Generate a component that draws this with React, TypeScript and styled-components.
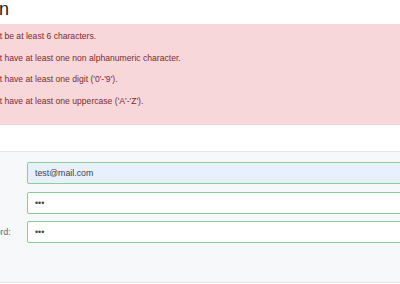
import styled, { createGlobalStyle } from 'styled-components';

const GlobalStyle = createGlobalStyle`
  html, body {
    margin: 0;
    padding: 0;
    background: #ffffff;
    overflow: hidden;
  }
  body {
    font-family: "Liberation Sans", Arial, sans-serif;
    font-size: 8.6px;
    color: #212529;
  }
`;

const Page = styled.div`
  width: 640px;
  margin-left: -83.5px;
`;

const Title = styled.h2`
  margin: 0 0 6px -3.5px;
  font-size: 18px;
  line-height: 18px;
  font-weight: 400;
  color: #222222;
`;

const Alert = styled.div`
  background: #f8d7da;
  color: #7a2a31;
  padding: 2px 0 13px 22.5px;
`;

const AlertLine = styled.div`
  line-height: 21.5px;
`;

const Panel = styled.form`
  margin-top: 26px;
  background: #f7f8fa;
  border-top: 1px solid #e4e6e8;
  border-bottom: 1px solid #e4e6e8;
  padding: 10px 0 39px 22.5px;
  display: flex;
  flex-direction: column;
  gap: 7.5px;
`;

const Row = styled.div`
  display: grid;
  grid-template-columns: 88px 1fr;
  align-items: center;
`;

const Label = styled.label`
  color: #5f656b;
  font-size: 8.6px;
`;

const Input = styled.input<{ $filled?: boolean }>`
  box-sizing: border-box;
  height: 22px;
  width: 100%;
  border: 1px solid #86cf98;
  border-radius: 2px;
  background: ${(p) => (p.$filled ? '#e8f0fe' : '#ffffff')};
  padding: 0 7px;
  font-family: "Liberation Sans", Arial, sans-serif;
  font-size: 8.8px;
  color: #3a3f44;
  outline: none;
`;

const errors = [
  'Passwords must be at least 6 characters.',
  'Passwords must have at least one non alphanumeric character.',
  "Passwords must have at least one digit ('0'-'9').",
  "Passwords must have at least one uppercase ('A'-'Z').",
];

export default function App() {
  return (
    <>
      <GlobalStyle />
      <Page>
        <Title>Registration</Title>
        <Alert>
          {errors.map((e) => (
            <AlertLine key={e}>{e}</AlertLine>
          ))}
        </Alert>
        <Panel onSubmit={(e) => e.preventDefault()}>
          <Row>
            <Label>Email:</Label>
            <Input $filled type="text" defaultValue="test@mail.com" />
          </Row>
          <Row>
            <Label>Password:</Label>
            <Input type="password" defaultValue="123" />
          </Row>
          <Row>
            <Label>Confirm password:</Label>
            <Input type="password" defaultValue="123" />
          </Row>
        </Panel>
      </Page>
    </>
  );
}
